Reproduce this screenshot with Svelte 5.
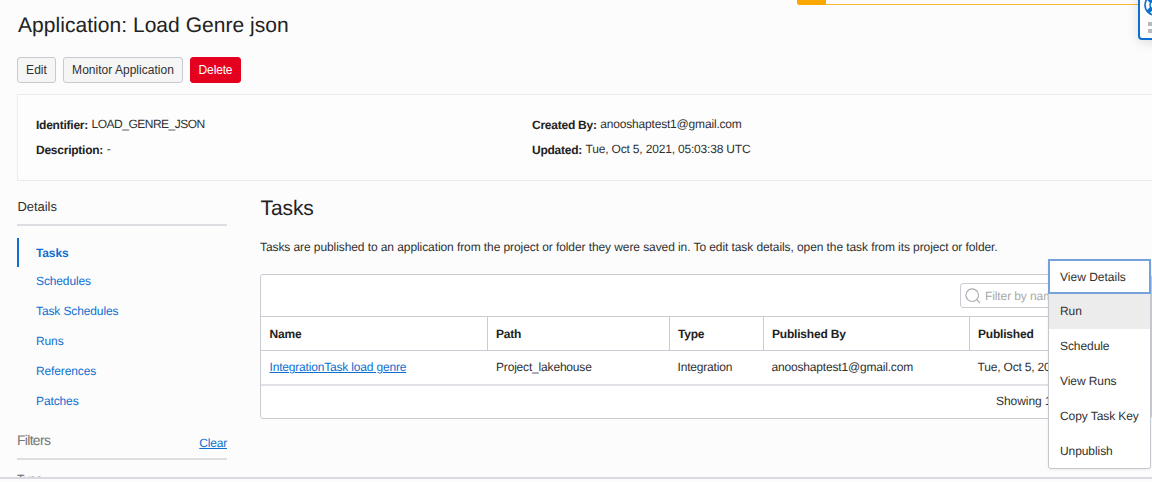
<script>
  const links = ['Schedules', 'Task Schedules', 'Runs', 'References', 'Patches'];
  const actions = ['View Details', 'Run', 'Schedule', 'View Runs', 'Copy Task Key', 'Unpublish'];
  const columns = ['Name', 'Path', 'Type', 'Published By', 'Published'];
</script>

<div class="page">
  <h1>Application: Load Genre json</h1>
  <div class="buttons">
    <button class="edit">Edit</button>
    <button class="monitor">Monitor Application</button>
    <button class="delete">Delete</button>
  </div>

  <section class="info">
    <div class="facts">
      <p><b>Identifier:</b><span class="ident">LOAD_GENRE_JSON</span></p>
      <p><b>Description:</b><span>-</span></p>
    </div>
    <div class="facts">
      <p><b>Created By:</b><span>anooshaptest1@gmail.com</span></p>
      <p><b>Updated:</b><span>Tue, Oct 5, 2021, 05:03:38 UTC</span></p>
    </div>
  </section>

  <div class="body">
    <aside>
      <div class="side-title">Details</div>
      <nav>
        <a class="active" href="#tasks">Tasks</a>
        {#each links as link}
          <a href="#tasks">{link}</a>
        {/each}
      </nav>
      <div class="filters"><span>Filters</span><a href="#clear">Clear</a></div>
      <div class="type">Type</div>
    </aside>

    <main>
      <h2>Tasks</h2>
      <p class="intro">Tasks are published to an application from the project or folder they were saved in. To edit task details, open the task from its project or folder.</p>
      <div class="table">
        <div class="toolbar">
          <div class="search">
            <svg width="16" height="16" viewBox="0 0 16 16" fill="none" stroke="#a9acb0" stroke-width="1.1">
              <circle cx="7.2" cy="7.2" r="6.3" />
              <path d="M11.7 11.7 15 15" />
            </svg>
            <span>Filter by name</span>
          </div>
        </div>
        <div class="row head">
          {#each columns as column}
            <div>{column}</div>
          {/each}
        </div>
        <div class="row data">
          <div><a class="task" href="#task">IntegrationTask load genre</a></div>
          <div>Project_lakehouse</div>
          <div>Integration</div>
          <div>anooshaptest1@gmail.com</div>
          <div>Tue, Oct 5, 2021</div>
        </div>
        <div class="foot">Showing 1 item</div>
      </div>
    </main>
  </div>

  <div class="bottom"></div>
  <div class="banner"><i></i></div>
  <div class="help">
    <svg width="22" height="22" viewBox="0 0 22 22" fill="none" stroke="#0f6fd0">
      <circle cx="11" cy="11" r="10" stroke-width="1.6" />
      <circle cx="11" cy="11" r="5" stroke-width="1.5" />
      <path d="M4 4 8 8M14 14l4 4M18 4l-4 4M8 14l-4 4" stroke-width="4" />
    </svg>
    <div class="dots"><i></i><i></i><i></i><i></i></div>
  </div>
  <div class="menu">
    {#each actions as action, i}
      <div class:focus={i === 0} class:hover={i === 1}><span>{action}</span></div>
    {/each}
  </div>
</div>

<style>
  :global(body) { margin: 0; background: #fcfcfc; overflow: hidden; }
  .page {
    position: relative; box-sizing: border-box; width: 1152px; height: 482px; overflow: hidden;
    padding: 12px 0 0 17px; background: #fcfcfc; color: #303030;
    font: 12px/16px "Liberation Sans", Arial, sans-serif; letter-spacing: -.18px;
    text-rendering: geometricPrecision;
  }
  h1, h2, p { margin: 0; font-weight: 400; }
  h1 { height: 27px; padding-left: 1px; font-size: 21px; line-height: 28px; letter-spacing: .04px; color: #222; }
  a { color: #0f6fd0; text-decoration: none; }
  .buttons { display: flex; gap: 7px; margin-top: 18px; }
  button {
    box-sizing: border-box; height: 26px; padding: 0; border: 1px solid #c7cbd1; border-radius: 3px;
    background: #f5f5f5; color: #303030; font: inherit; letter-spacing: .02px;
  }
  .edit { width: 39px; }
  .monitor { width: 120px; }
  .delete { width: 51px; border-color: #e6001f; background: #e6001f; color: #fff; letter-spacing: -.15px; }
  .info {
    box-sizing: border-box; display: grid; grid-template-columns: 496px 1fr; width: 1150px; height: 87px;
    margin-top: 11px; padding: 21px 18px; border: 1px solid #ebebeb; background: #fdfdfd;
  }
  .facts { display: flex; flex-direction: column; gap: 9px; }
  .facts p { display: flex; gap: 3.5px; }
  .ident { letter-spacing: -.5px; }
  b { color: #222; letter-spacing: -.24px; padding-top: 1px; height: 15px; }
  .body { display: grid; grid-template-columns: 210px 1fr; column-gap: 33px; }
  .side-title { height: 43px; padding-left: .5px; border-bottom: 2px solid #dcdee2; font-size: 13px; line-height: 51px; letter-spacing: -.05px; }
  nav { display: flex; flex-direction: column; padding-top: 12px; }
  nav a { height: 30px; padding-left: 19px; line-height: 29px; letter-spacing: -.12px; }
  nav .active { box-sizing: border-box; height: 29px; padding-left: 17px; border-left: 2px solid #0f6fd0; line-height: 30px; font-weight: 700; }
  .filters {
    display: flex; justify-content: space-between; height: 41px; border-bottom: 2px solid #dcdee2;
    font-size: 14px; line-height: 46px; letter-spacing: -.7px; color: #777;
  }
  .filters a { font-size: 12px; line-height: 53px; letter-spacing: -.2px; text-decoration: underline; }
  .type { margin-top: 11px; color: #666; }
  h2 { height: 54px; padding-left: .5px; font-size: 21px; line-height: 56px; letter-spacing: -.1px; color: #222; }
  .intro { height: 16px; margin-top: 4px; white-space: nowrap; letter-spacing: -.085px; }
  .table { box-sizing: border-box; height: 145px; margin-top: 19px; border: 1px solid #c9cdd3; border-radius: 3px; background: #fff; }
  .toolbar { display: flex; height: 41px; padding: 8px 0 0 699px; box-sizing: border-box; }
  .search {
    box-sizing: border-box; display: flex; align-items: center; gap: 4px; width: 189px; height: 25px; padding-left: 4px;
    border: 1px solid #c9cdd3; border-radius: 3px; color: #a9a9a9; letter-spacing: -.1px;
  }
  .row { display: grid; grid-template-columns: 226px 182px 94px 206px 1fr; box-sizing: border-box; }
  .row div { padding-left: 8.5px; white-space: nowrap; }
  .head { height: 35px; border: solid #c9cdd3; border-width: 1px 0; color: #222; font-weight: 700; line-height: 34px; letter-spacing: -.2px; }
  .head div + div { padding-left: 8px; border-left: 1px solid #c9cdd3; }
  .data { height: 35px; border-bottom: 2px solid #e1e2e7; line-height: 33px; }
  .data div + div { padding-left: 9px; }
  .data div:nth-child(n + 3) { padding-left: 8.5px; }
  .task { text-decoration: underline; }
  .foot { padding-left: 735px; line-height: 31px; letter-spacing: -.05px; }
  .bottom { position: absolute; left: 0; right: 0; top: 477px; height: 4px; border-top: 2px solid #d9dbe0; background: #fcfcfc; }
  .banner { position: absolute; left: 797px; top: -5px; width: 400px; height: 9px; border-bottom: 1px solid #f5b72f; border-radius: 0 0 0 3px; }
  .banner i { display: block; width: 29px; height: 10px; background: #faa800; border-radius: 0 0 0 3px; }
  .help {
    position: absolute; left: 1138px; top: -6px; width: 30px; height: 42px; border: 2px solid #0f6fd0;
    border-radius: 4px; background: #fcfcfc; box-shadow: 0 2px 12px #0002;
  }
  .help svg { display: block; margin: -2px 0 0 4px; }
  .dots { display: grid; grid-template-columns: 4px 4px; gap: 3px; margin: 6px 0 0 8px; }
  .dots i { height: 4px; background: #b7b9be; }
  .menu {
    box-sizing: border-box; position: absolute; left: 1048px; top: 259px; width: 103px; height: 210px;
    border: 1px solid #c3c8cf; border-radius: 3px; background: #fff; box-shadow: 0 1px 3px #0001;
  }
  .menu div { box-sizing: border-box; height: 35px; padding-left: 11px; line-height: 34px; white-space: nowrap; letter-spacing: -.08px; }
  .menu .focus { height: 35px; margin: -1px -1px 0; padding-left: 10px; border: 2px solid #76a2dc; line-height: 32px; letter-spacing: 0; }
  .menu .hover { background: #ececec; line-height: 35px; }
</style>
